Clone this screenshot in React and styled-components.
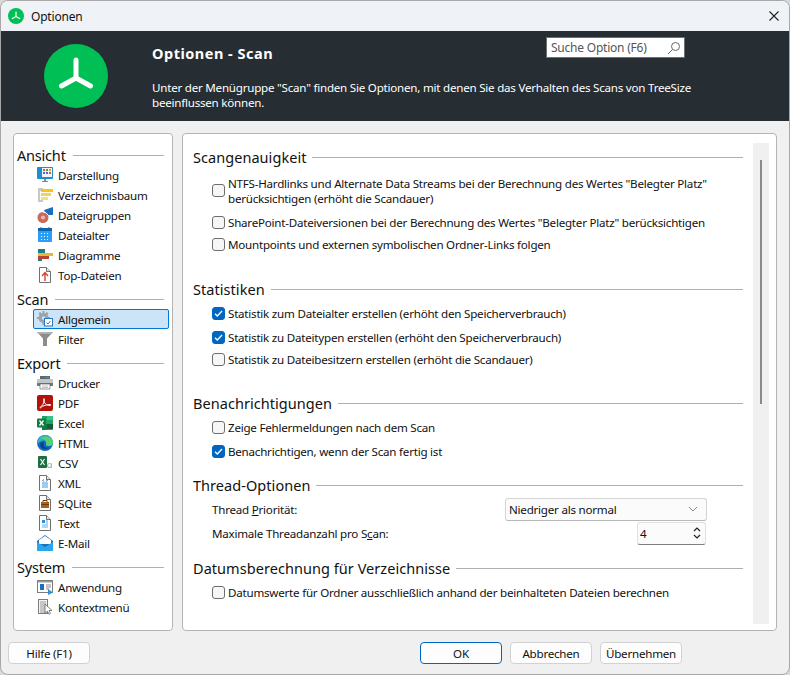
import styled, { createGlobalStyle } from 'styled-components';

const GlobalStyle = createGlobalStyle`
  html, body {
    margin: 0;
    padding: 0;
    background: #d8d8d8;
  }
  * {
    box-sizing: border-box;
  }
`;

const Window = styled.div`
  width: 790px;
  height: 675px;
  background: #f0f0f0;
  border: 1px solid #a8a8a8;
  border-radius: 8px;
  overflow: hidden;
  display: flex;
  flex-direction: column;
  font-family: 'Noto Sans', 'Open Sans', sans-serif;
  font-size: 11.6px;
  letter-spacing: -0.23px;
  color: #111;
`;

const TitleBar = styled.div`
  height: 30px;
  flex: none;
  background: #eff3f8;
  display: flex;
  align-items: center;
  padding: 0 10px 0 7px;
  gap: 7px;
`;

const TitleText = styled.span`
  flex: 1;
  font-size: 12px;
  letter-spacing: -0.2px;
`;

const Header = styled.header`
  height: 90px;
  flex: none;
  background: #262e33;
  display: flex;
  color: #fff;
`;

const LogoSlot = styled.div`
  width: 151px;
  padding: 13px 0 0 43px;
`;

const HeaderText = styled.div`
  flex: 1;
  padding-top: 11px;
`;

const HeaderTitle = styled.h1`
  margin: 0 0 16px;
  font-size: 14.5px;
  line-height: 22px;
  font-weight: 700;
  letter-spacing: 0.5px;
`;

const HeaderDesc = styled.p`
  margin: 0;
  line-height: 15px;
  width: 570px;
`;

const SearchBox = styled.div`
  position: absolute;
  top: 37px;
  left: 546px;
  width: 139px;
  height: 21px;
  background: #fff;
  border: 1px solid #6b6f72;
  color: #555;
  font-size: 12px;
  letter-spacing: -0.22px;
  display: flex;
  align-items: center;
  justify-content: space-between;
  padding: 0 3px 0 4px;
`;

const Body = styled.div`
  flex: none;
  display: flex;
  gap: 9px;
  padding: 12px 12px 0 12px;
`;

const Panel = styled.div`
  height: 498px;
  background: #fff;
  border: 1px solid #b4b4b4;
  border-radius: 4px;
`;

const Sidebar = styled(Panel)`
  width: 160px;
  flex: none;
  padding: 11px 3px 0 3px;
`;

const Group = styled.section`
  margin-bottom: 4px;
`;

const GroupTitle = styled.div`
  display: flex;
  align-items: center;
  gap: 7px;
  height: 20px;
  font-size: 14.5px;
  letter-spacing: -0.2px;
  padding-right: 5px;

  &::after {
    content: '';
    flex: 1;
    height: 1px;
    background: #b0b0b0;
  }
`;

const NavItem = styled.div`
  height: 20px;
  margin-left: 16px;
  padding-left: 3px;
  display: flex;
  align-items: center;
  gap: 5px;
  border: 1px solid ${({ $active }) => ($active ? '#0078d4' : 'transparent')};
  border-radius: 2px;
  background: ${({ $active }) => ($active ? '#cce4f7' : 'transparent')};
`;

const Content = styled(Panel)`
  flex: 1;
  display: flex;
  padding: 9px 7px 6px 10px;
`;

const Scroller = styled.div`
  flex: 1;
  padding: 4px 10px 0 0;
  overflow: hidden;
`;

const Track = styled.div`
  width: 16px;
  flex: none;
  background: #f0f0f0;
  padding: 17px 0 0 7px;
`;

const Thumb = styled.div`
  width: 2px;
  height: 244px;
  background: #8a8a8a;
`;

const Section = styled.section`
  margin-bottom: ${({ $gap }) => $gap}px;
`;

const SectionTitle = styled.h2`
  margin: 0;
  display: flex;
  align-items: center;
  gap: 6px;
  height: 20px;
  font-size: 14.5px;
  font-weight: 400;
  letter-spacing: 0.05px;

  &::after {
    content: '';
    flex: 1;
    height: 1px;
    background: #b0b0b0;
  }
`;

const OptionList = styled.div`
  display: flex;
  flex-direction: column;
  padding: 2px 0 0 19px;
`;

const Option = styled.label`
  display: flex;
  align-items: center;
  gap: 3px;
  height: ${({ $h }) => $h || 24}px;
  line-height: 15px;
`;

const Box = styled.span`
  width: 13px;
  height: 13px;
  flex: none;
  border-radius: 3px;
  border: 1px solid ${({ $on }) => ($on ? '#0067c0' : '#6e6e6e')};
  background: ${({ $on }) => ($on ? '#0067c0' : '#f6f6f6')};
  display: flex;
  align-items: center;
  justify-content: center;
`;

const FieldList = styled.div`
  padding-top: 2px;
`;

const FieldRow = styled.div`
  display: flex;
  align-items: center;
  justify-content: space-between;
  height: 24px;
  padding: 0 36px 0 19px;
`;

const Combo = styled.div`
  width: 202px;
  height: 23px;
  background: #fbfbfb;
  border: 1px solid #d4d4d4;
  border-bottom-color: #b8b8b8;
  border-radius: 3px;
  display: flex;
  align-items: center;
  justify-content: space-between;
  padding: 0 8px 0 3px;
`;

const Spin = styled.div`
  width: 69px;
  height: 23px;
  margin-right: 1px;
  background: #fbfbfb;
  border: 1px solid #e0e0e0;
  border-bottom-color: #7f7f7f;
  border-radius: 3px;
  display: flex;
  align-items: center;
  justify-content: space-between;
  padding: 0 3px 0 2px;
`;

const Footer = styled.footer`
  flex: 1;
  display: flex;
  align-items: flex-start;
  padding: 11px 0 0 7px;
  gap: 8px;
`;

const Button = styled.button`
  width: 82px;
  height: 22px;
  padding: 0;
  font: inherit;
  letter-spacing: inherit;
  color: inherit;
  background: #fdfdfd;
  border: 1px solid ${({ $primary }) => ($primary ? '#0067c0' : '#d2d2d2')};
  border-radius: 4px;
  ${({ $push }) => $push && 'margin-right: 322px;'}
`;

const Mn = styled.span`
  text-decoration: underline;
`;

const Doc = ({ children }) => (
  <svg width="16" height="16" viewBox="0 0 16 16">
    <path d="M2.5.5h7l4 4v11h-11z" fill="#fff" stroke="#707070" />
    <path d="M9.5.5v4h4" fill="#e8e8e8" stroke="#707070" />
    {children}
  </svg>
);

const Svg = ({ children }) => (
  <svg width="16" height="16" viewBox="0 0 16 16">{children}</svg>
);

const icons = {
  monitor: (
    <Svg>
      <rect x="0" y="0" width="16" height="12" rx="1" fill="#1a8fd0" />
      <rect x="5" y="1" width="10" height="9" fill="#f4f4f4" />
      <path d="M6 2h2v2H6z" fill="#d9534f" />
      <path d="M9 2h2v2H9z" fill="#3aa655" />
      <path d="M12 2h2v2h-2z" fill="#e6a020" />
      <path d="M6 5h2v2H6z" fill="#2d7dd2" />
      <path d="M9 5h2v2H9z" fill="#8a4fbf" />
      <path d="M12 5h2v2h-2z" fill="#d9534f" />
      <path d="M7 12h2v2h2v1H5v-1h2z" fill="#7a8a96" />
    </Svg>
  ),
  tree: (
    <Svg>
      <path d="M1 1h5v14H1z" fill="#c8c8c8" />
      <path d="M3 4h3v9H3z" fill="#fff" />
      <path d="M4 2h12v3H4z" fill="#f5c518" />
      <path d="M4 6h10v3H4z" fill="#f7d44c" />
      <path d="M4 10h7v3H4z" fill="#f9de7a" />
    </Svg>
  ),
  groups: (
    <Svg>
      <path d="M7 3l9-3v8H9z" fill="#1a6fc0" />
      <circle cx="6" cy="10.500" r="5.500" fill="#c9695c" />
      <circle cx="6" cy="10.500" r="2" fill="#e8b9b0" />
      <path d="M6 5a5.500 5.500 0 0 1 5 3" stroke="#fff" fill="none" />
    </Svg>
  ),
  calendar: (
    <Svg>
      <rect x="1" y="1" width="14" height="14" rx="1" fill="#2a9df4" />
      <rect x="1" y="1" width="14" height="3" fill="#1266b0" />
      <path d="M3.500 0h1v3h-1zM11.500 0h1v3h-1z" fill="#1266b0" />
      <path d="M4 6h1v1H4zM7 6h1v1H7zM10 6h1v1h-1zM4 9h1v1H4zM7 9h1v1H7zM10 9h1v1h-1zM4 12h1v1H4zM7 12h1v1H7zM10 12h1v1h-1z" fill="#fff" />
    </Svg>
  ),
  chart: (
    <Svg>
      <path d="M1 2h7v4H1z" fill="#1e7a8c" />
      <path d="M1 6h15v3H1z" fill="#e2b93b" />
      <path d="M1 9h11v3H1z" fill="#b5432f" />
      <path d="M1 12h4v2H1z" fill="#1e7a8c" />
    </Svg>
  ),
  top: (
    <Doc>
      <path d="M8 14V6M5 9l3-3.500L11 9" fill="none" stroke="#d2452f" strokeWidth="1.400" />
    </Doc>
  ),
  general: (
    <Svg>
      <circle cx="6.500" cy="7" r="5" fill="#9aa3aa" />
      <path d="M5.500 0h2v3h-2zM0 6h3v2H0zM10 6h3v2h-3zM5.500 11h2v3h-2zM1.500 2l2-1 1 2-2 1zM9.500 1l2 1-1 2-2-1z" fill="#9aa3aa" />
      <circle cx="6.500" cy="7" r="1.800" fill="#cce4f7" />
      <rect x="7.500" y="7.500" width="8" height="7.500" fill="#fff" stroke="#2c77bf" />
      <path d="M9.500 11.500l1.500 1.500 2.500-3" fill="none" stroke="#2c77bf" />
    </Svg>
  ),
  filter: (
    <Svg>
      <path d="M0 1h16l-6 6.500V15H6V7.500z" fill="#8c8c8c" />
      <path d="M0 1h16l-1.500 2h-13z" fill="#b0b0b0" />
    </Svg>
  ),
  printer: (
    <Svg>
      <path d="M3 1h10v3H3z" fill="#5a6a72" />
      <path d="M9 2h3v1H9z" fill="#39b54a" />
      <rect x="0" y="4" width="16" height="7" rx="1" fill="#bfc5c9" />
      <path d="M0 8h16v3H0z" fill="#6f7a80" />
      <path d="M3 9h10v5H3z" fill="#fff" stroke="#555" strokeWidth=".6" />
      <path d="M5 11h6M5 12.500h6" stroke="#999" strokeWidth=".6" />
    </Svg>
  ),
  pdf: (
    <Svg>
      <rect width="16" height="16" rx="2" fill="#b3120c" />
      <path d="M3 12.500c2-1 4-4.500 4.500-8 .2-1.200-1-1.200-1 0 .3 3.500 3 6 6.500 6 1 0 1-1 0-1-3 0-7 1.200-9.500 3-.6.400-.6 1 0 .500z" fill="none" stroke="#fff" strokeWidth="1" />
    </Svg>
  ),
  excel: (
    <Svg>
      <path d="M5 1h10a1 1 0 0 1 1 1v12a1 1 0 0 1-1 1H5z" fill="#21a366" />
      <path d="M10 1h6v4h-6z" fill="#33c481" />
      <path d="M10 9h6v5h-6z" fill="#185c37" />
      <path d="M5 9h5v6H5z" fill="#107c41" />
      <rect x="0" y="3.500" width="9" height="9" rx="1" fill="#107c41" />
      <path d="M2.500 5.500l4 5M6.500 5.500l-4 5" stroke="#fff" strokeWidth="1.300" />
    </Svg>
  ),
  edge: (
    <Svg>
      <circle cx="8" cy="8" r="8" fill="#0f6cbd" />
      <path d="M8 0a8 8 0 0 1 8 8c0 2-2 3-4 3-2.500 0-3-1-3-2 1-2-1-4-3-3.500C3 6 1 8 .3 10 0 4 4 0 8 0z" fill="#2bb6c9" />
      <path d="M16 8c0 2-2 3-4 3-1.500 0-2.500-.5-3-1.500C10 6 7 3 3.500 3.800 7 1 12 .5 15 4.500c.7 1 1 2.300 1 3.500z" fill="#5ad16e" />
      <path d="M3 9c0 3 3 5.500 6 5 1.500-.2 2.500-.8 3-1.500-3 1-5.500-.5-5.500-3 0-1 .5-2 .5-2C5 6.800 3 7.500 3 9z" fill="#0b3f8f" />
    </Svg>
  ),
  csv: (
    <Svg>
      <rect x="1" y="1" width="9" height="12" rx="1" fill="#1d6f42" />
      <path d="M3.500 4l4 6M7.500 4l-4 6" stroke="#fff" strokeWidth="1.200" />
      <circle cx="12.500" cy="10.500" r="2" fill="none" stroke="#9cc4ad" strokeWidth="1.200" />
      <path d="M14.500 8.500v4.500" stroke="#9cc4ad" strokeWidth="1" />
    </Svg>
  ),
  xml: (
    <Doc>
      <path d="M5 8h6M5 10h6M5 12h6" stroke="#3a9ae0" />
      <path d="M7 4.500L5.500 5.500 7 6.500M9 4.500l1.500 1L9 6.500" fill="none" stroke="#3a6fb0" strokeWidth=".8" />
    </Doc>
  ),
  sqlite: (
    <Doc>
      <rect x="4" y="7" width="8" height="6" fill="#a8601f" />
      <path d="M6 7V5.500h4V7" fill="none" stroke="#6b3d12" />
      <path d="M4 9.500h8" stroke="#6b3d12" />
    </Doc>
  ),
  text: (
    <Doc>
      <path d="M5 5h3v3H5z" fill="#2c8fe0" />
      <path d="M9 6h2M9 8h2M5 10h6M5 12h6" stroke="#5ab0ec" />
    </Doc>
  ),
  mail: (
    <Svg>
      <path d="M0 6l8-6 8 6v9a1 1 0 0 1-1 1H1a1 1 0 0 1-1-1z" fill="#1a6fc0" />
      <path d="M2 5l6-4 6 4v4H2z" fill="#ffffff" />
      <path d="M0 7l8 5 8-5v8a1 1 0 0 1-1 1H1a1 1 0 0 1-1-1z" fill="#28a8ea" />
    </Svg>
  ),
  app: (
    <Svg>
      <rect x=".5" y="1.500" width="15" height="12" fill="#fff" stroke="#7c7c7c" />
      <path d="M1 2h14v1.500H1z" fill="#9a9a9a" />
      <path d="M3 5h4v6H3z" fill="#1a6fc0" />
      <path d="M9 6h5M9 8h5M9 10h3" stroke="#888" />
      <path d="M11 10l5 3.500-5 2.500z" fill="#2c8fe0" />
    </Svg>
  ),
  context: (
    <Svg>
      <rect x="1.500" y=".5" width="9" height="14" fill="#f4f4f4" stroke="#7c7c7c" />
      <path d="M3 3h6M3 5h6M3 7h6M3 9h6M3 11h6M3 13h6" stroke="#9a9a9a" />
      <path d="M8 5l7 6.500h-3l1.500 3-1.500.8-1.500-3L8 14z" fill="#fff" stroke="#666" strokeWidth=".8" />
    </Svg>
  ),
};

const groups = [
  {
    title: 'Ansicht',
    items: [
      ['monitor', 'Darstellung'],
      ['tree', 'Verzeichnisbaum'],
      ['groups', 'Dateigruppen'],
      ['calendar', 'Dateialter'],
      ['chart', 'Diagramme'],
      ['top', 'Top-Dateien'],
    ],
  },
  {
    title: 'Scan',
    items: [
      ['general', 'Allgemein', true],
      ['filter', 'Filter'],
    ],
  },
  {
    title: 'Export',
    items: [
      ['printer', 'Drucker'],
      ['pdf', 'PDF'],
      ['excel', 'Excel'],
      ['edge', 'HTML'],
      ['csv', 'CSV'],
      ['xml', 'XML'],
      ['sqlite', 'SQLite'],
      ['text', 'Text'],
      ['mail', 'E-Mail'],
    ],
  },
  {
    title: 'System',
    items: [
      ['app', 'Anwendung'],
      ['context', 'Kontextmenü'],
    ],
  },
];

const Logo = ({ size }) => (
  <svg width={size} height={size} viewBox="0 0 64 64">
    <circle cx="32" cy="32" r="32" fill="#00bf55" />
    <path
      d="M32 16v18M32 34l-14.500 8M32 34l14.500 8"
      fill="none"
      stroke="#fff"
      strokeWidth="5"
      strokeLinecap="round"
      strokeLinejoin="round"
    />
  </svg>
);

const CheckOption = ({ on, h, children }) => (
  <Option $h={h}>
    <Box $on={on}>
      {on && (
        <svg width="9" height="9" viewBox="0 0 9 9">
          <path d="M1 4.700l2.300 2.300L8 2" fill="none" stroke="#fff" strokeWidth="1.300" />
        </svg>
      )}
    </Box>
    <span>{children}</span>
  </Option>
);

export default function App() {
  return (
    <Window>
      <GlobalStyle />
      <TitleBar>
        <Logo size={16} />
        <TitleText>Optionen</TitleText>
        <svg width="10" height="10" viewBox="0 0 10 10">
          <path d="M.5.5l9 9M9.500.5l-9 9" stroke="#222" strokeWidth="1.100" />
        </svg>
      </TitleBar>

      <Header>
        <LogoSlot>
          <Logo size={64} />
        </LogoSlot>
        <HeaderText>
          <HeaderTitle>Optionen - Scan</HeaderTitle>
          <HeaderDesc>
            Unter der Menügruppe "Scan" finden Sie Optionen, mit denen Sie das Verhalten des Scans von TreeSize beeinflussen können.
          </HeaderDesc>
        </HeaderText>
        <SearchBox>
          <span>Suche Option (F6)</span>
          <svg width="14" height="14" viewBox="0 0 14 14">
            <circle cx="8.500" cy="5.500" r="4" fill="none" stroke="#666" />
            <path d="M5.500 8.500L1 13" stroke="#666" />
          </svg>
        </SearchBox>
      </Header>

      <Body>
        <Sidebar>
          {groups.map(group => (
            <Group key={group.title}>
              <GroupTitle>{group.title}</GroupTitle>
              {group.items.map(([icon, label, active]) => (
                <NavItem key={label} $active={active}>
                  {icons[icon]}
                  <span>{label}</span>
                </NavItem>
              ))}
            </Group>
          ))}
        </Sidebar>

        <Content>
          <Scroller>
            <Section $gap={23}>
              <SectionTitle>Scangenauigkeit</SectionTitle>
              <OptionList>
                <CheckOption h={43}>
                  NTFS-Hardlinks und Alternate Data Streams bei der Berechnung des Wertes "Belegter Platz"
                  <br />
                  berücksichtigen (erhöht die Scandauer)
                </CheckOption>
                <CheckOption h={20}>SharePoint-Dateiversionen bei der Berechnung des Wertes "Belegter Platz" berücksichtigen</CheckOption>
                <CheckOption>Mountpoints und externen symbolischen Ordner-Links folgen</CheckOption>
              </OptionList>
            </Section>

            <Section $gap={24}>
              <SectionTitle>Statistiken</SectionTitle>
              <OptionList>
                <CheckOption on>Statistik zum Dateialter erstellen (erhöht den Speicherverbrauch)</CheckOption>
                <CheckOption on>Statistik zu Dateitypen erstellen (erhöht den Speicherverbrauch)</CheckOption>
                <CheckOption h={20}>Statistik zu Dateibesitzern erstellen (erhöht die Scandauer)</CheckOption>
              </OptionList>
            </Section>

            <Section $gap={12}>
              <SectionTitle>Benachrichtigungen</SectionTitle>
              <OptionList>
                <CheckOption>Zeige Fehlermeldungen nach dem Scan</CheckOption>
                <CheckOption on>Benachrichtigen, wenn der Scan fertig ist</CheckOption>
              </OptionList>
            </Section>

            <Section $gap={13}>
              <SectionTitle>Thread-Optionen</SectionTitle>
              <FieldList>
                <FieldRow>
                  <span>
                    Thread <Mn>P</Mn>riorität:
                  </span>
                  <Combo>
                    <span>Niedriger als normal</span>
                    <svg width="10" height="6" viewBox="0 0 10 6">
                      <path d="M1 1l4 4 4-4" fill="none" stroke="#888" />
                    </svg>
                  </Combo>
                </FieldRow>
                <FieldRow>
                  <span>
                    Maximale Threadanzahl pro S<Mn>c</Mn>an:
                  </span>
                  <Spin>
                    <span>4</span>
                    <svg width="10" height="14" viewBox="0 0 10 14">
                      <path d="M2 5l3-3 3 3M2 9l3 3 3-3" fill="none" stroke="#222" strokeWidth="1.200" />
                    </svg>
                  </Spin>
                </FieldRow>
              </FieldList>
            </Section>

            <Section $gap={0}>
              <SectionTitle>Datumsberechnung für Verzeichnisse</SectionTitle>
              <OptionList>
                <CheckOption>Datumswerte für Ordner ausschließlich anhand der beinhalteten Dateien berechnen</CheckOption>
              </OptionList>
            </Section>
          </Scroller>
          <Track>
            <Thumb />
          </Track>
        </Content>
      </Body>

      <Footer>
        <Button $push>Hilfe (F1)</Button>
        <Button $primary>OK</Button>
        <Button>Abbrechen</Button>
        <Button>Übernehmen</Button>
      </Footer>
    </Window>
  );
}
